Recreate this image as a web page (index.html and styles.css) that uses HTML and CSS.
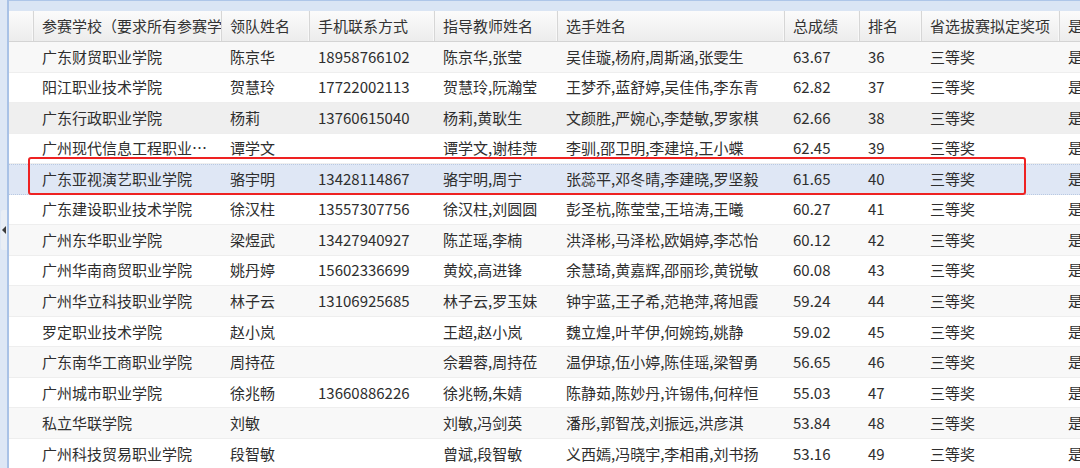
FILE: index.html
```html
<!DOCTYPE html>
<html lang="zh-CN">
<head>
<meta charset="utf-8">
<title>省选拔赛成绩</title>
<link rel="stylesheet" href="styles.css">
</head>
<body>
<div class="frame">
  <div class="rail"><div class="handle"><span class="tri"></span></div></div>
  <div class="main">
    <div class="topband"></div>
    <div class="grid">
      <div class="row head">
        <div class="c c0"></div>
        <div class="c c1">参赛学校（要求所有参赛学校全称）</div>
        <div class="c c2">领队姓名</div>
        <div class="c c3">手机联系方式</div>
        <div class="c c4">指导教师姓名</div>
        <div class="c c5">选手姓名</div>
        <div class="c c6">总成绩</div>
        <div class="c c7">排名</div>
        <div class="c c8">省选拔赛拟定奖项</div>
        <div class="c c9">是否推荐</div>
      </div>
      <div class="row alt">
        <div class="c c0"></div><div class="c c1">广东财贸职业学院</div><div class="c c2">陈京华</div><div class="c c3">18958766102</div><div class="c c4">陈京华,张莹</div><div class="c c5">吴佳璇,杨府,周斯涵,张雯生</div><div class="c c6">63.67</div><div class="c c7">36</div><div class="c c8">三等奖</div><div class="c c9">是</div>
      </div>
      <div class="row">
        <div class="c c0"></div><div class="c c1">阳江职业技术学院</div><div class="c c2">贺慧玲</div><div class="c c3">17722002113</div><div class="c c4">贺慧玲,阮瀚莹</div><div class="c c5">王梦乔,蓝舒婷,吴佳伟,李东青</div><div class="c c6">62.82</div><div class="c c7">37</div><div class="c c8">三等奖</div><div class="c c9">是</div>
      </div>
      <div class="row hover">
        <div class="c c0"></div><div class="c c1">广东行政职业学院</div><div class="c c2">杨莉</div><div class="c c3">13760615040</div><div class="c c4">杨莉,黄耿生</div><div class="c c5">文颜胜,严婉心,李楚敏,罗家棋</div><div class="c c6">62.66</div><div class="c c7">38</div><div class="c c8">三等奖</div><div class="c c9">是</div>
      </div>
      <div class="row">
        <div class="c c0"></div><div class="c c1">广州现代信息工程职业学院</div><div class="c c2">谭学文</div><div class="c c3"></div><div class="c c4">谭学文,谢桂萍</div><div class="c c5">李驯,邵卫明,李建培,王小蝶</div><div class="c c6">62.45</div><div class="c c7">39</div><div class="c c8">三等奖</div><div class="c c9">是</div>
      </div>
      <div class="row selected">
        <div class="c c0"></div><div class="c c1">广东亚视演艺职业学院</div><div class="c c2">骆宇明</div><div class="c c3">13428114867</div><div class="c c4">骆宇明,周宁</div><div class="c c5">张蕊平,邓冬晴,李建晓,罗坚毅</div><div class="c c6">61.65</div><div class="c c7">40</div><div class="c c8">三等奖</div><div class="c c9">是</div>
        <div class="mark"></div>
      </div>
      <div class="row">
        <div class="c c0"></div><div class="c c1">广东建设职业技术学院</div><div class="c c2">徐汉柱</div><div class="c c3">13557307756</div><div class="c c4">徐汉柱,刘圆圆</div><div class="c c5">彭圣杭,陈莹莹,王培涛,王曦</div><div class="c c6">60.27</div><div class="c c7">41</div><div class="c c8">三等奖</div><div class="c c9">是</div>
      </div>
      <div class="row alt">
        <div class="c c0"></div><div class="c c1">广州东华职业学院</div><div class="c c2">梁煜武</div><div class="c c3">13427940927</div><div class="c c4">陈芷瑶,李楠</div><div class="c c5">洪泽彬,马泽松,欧娟婷,李芯怡</div><div class="c c6">60.12</div><div class="c c7">42</div><div class="c c8">三等奖</div><div class="c c9">是</div>
      </div>
      <div class="row">
        <div class="c c0"></div><div class="c c1">广州华南商贸职业学院</div><div class="c c2">姚丹婷</div><div class="c c3">15602336699</div><div class="c c4">黄姣,高进锋</div><div class="c c5">余慧琦,黄嘉辉,邵丽珍,黄锐敏</div><div class="c c6">60.08</div><div class="c c7">43</div><div class="c c8">三等奖</div><div class="c c9">是</div>
      </div>
      <div class="row alt">
        <div class="c c0"></div><div class="c c1">广州华立科技职业学院</div><div class="c c2">林子云</div><div class="c c3">13106925685</div><div class="c c4">林子云,罗玉妹</div><div class="c c5">钟宇蓝,王子希,范艳萍,蒋旭霞</div><div class="c c6">59.24</div><div class="c c7">44</div><div class="c c8">三等奖</div><div class="c c9">是</div>
      </div>
      <div class="row">
        <div class="c c0"></div><div class="c c1">罗定职业技术学院</div><div class="c c2">赵小岚</div><div class="c c3"></div><div class="c c4">王超,赵小岚</div><div class="c c5">魏立煌,叶芊伊,何婉筠,姚静</div><div class="c c6">59.02</div><div class="c c7">45</div><div class="c c8">三等奖</div><div class="c c9">是</div>
      </div>
      <div class="row alt">
        <div class="c c0"></div><div class="c c1">广东南华工商职业学院</div><div class="c c2">周持莅</div><div class="c c3"></div><div class="c c4">佘碧蓉,周持莅</div><div class="c c5">温伊琼,伍小婷,陈佳瑶,梁智勇</div><div class="c c6">56.65</div><div class="c c7">46</div><div class="c c8">三等奖</div><div class="c c9">是</div>
      </div>
      <div class="row">
        <div class="c c0"></div><div class="c c1">广州城市职业学院</div><div class="c c2">徐兆畅</div><div class="c c3">13660886226</div><div class="c c4">徐兆畅,朱婧</div><div class="c c5">陈静茹,陈妙丹,许锡伟,何梓恒</div><div class="c c6">55.03</div><div class="c c7">47</div><div class="c c8">三等奖</div><div class="c c9">是</div>
      </div>
      <div class="row alt">
        <div class="c c0"></div><div class="c c1">私立华联学院</div><div class="c c2">刘敏</div><div class="c c3"></div><div class="c c4">刘敏,冯剑英</div><div class="c c5">潘彤,郭智茂,刘振远,洪彦淇</div><div class="c c6">53.84</div><div class="c c7">48</div><div class="c c8">三等奖</div><div class="c c9">是</div>
      </div>
      <div class="row">
        <div class="c c0"></div><div class="c c1">广州科技贸易职业学院</div><div class="c c2">段智敏</div><div class="c c3"></div><div class="c c4">曾斌,段智敏</div><div class="c c5">义西嫣,冯晓宇,李相甫,刘书扬</div><div class="c c6">53.16</div><div class="c c7">49</div><div class="c c8">三等奖</div><div class="c c9">是</div>
      </div>
    </div>
  </div>
</div>
</body>
</html>
```
FILE: styles.css
```css
html, body {
  margin: 0;
  padding: 0;
  height: 100%;
  overflow: hidden;
  background: #ffffff;
}
body {
  font-family: "Noto Sans CJK SC", "Liberation Sans", sans-serif;
  font-size: 15px;
  color: #2e2e2e;
}
.frame {
  display: flex;
  height: 468px;
  width: 1080px;
  overflow: hidden;
}
.rail {
  position: relative;
  width: 7px;
  flex: 0 0 7px;
  background: #dde7f5;
  border-right: 2px solid #a9c2e6;
}
.handle {
  position: absolute;
  left: 1px;
  top: 210px;
  width: 6px;
  height: 40px;
  background: #e9eef5;
  border-radius: 2px 0 0 2px;
}
.tri {
  position: absolute;
  left: 1px;
  top: 16px;
  width: 0;
  height: 0;
  border-top: 4px solid transparent;
  border-bottom: 4px solid transparent;
  border-right: 4px solid #3c3c3c;
}
.main {
  flex: 1;
  display: flex;
  flex-direction: column;
  min-width: 0;
}
.topband {
  height: 11px;
  flex: 0 0 11px;
  background: #dae5f4;
  border-top: 1px solid #aec6e8;
  box-sizing: border-box;
}
.grid {
  display: flex;
  flex-direction: column;
}
.row {
  position: relative;
  display: flex;
  height: 30.54px;
  flex: 0 0 30.54px;
  box-sizing: border-box;
  border-bottom: 1px solid #eeeeee;
  background: #ffffff;
  align-items: center;
}
.row.alt { background: #f8f8f8; }
.row.hover { background: #efefef; }
.row.selected {
  background: #dfe7f5;
  border-top: 1px dotted #b9c9e2;
  border-bottom: 1px dotted #b9c9e2;
}
.row.head {
  height: 31px;
  flex: 0 0 31px;
  background: linear-gradient(#fbfbfb, #ececec);
  border-bottom: 1px solid #d4d4d4;
  color: #333333;
}
.c {
  box-sizing: border-box;
  padding-left: 8px;
  padding-right: 6px;
  white-space: nowrap;
  overflow: hidden;
  text-overflow: ellipsis;
  flex: 0 0 auto;
  line-height: 30px;
}
.head .c {
  text-overflow: clip;
  padding-right: 0;
  border-right: 1px solid #d6d6d6;
  box-shadow: inset -1px 0 0 #f8f8f8;
  height: 30px;
}
.c0 { width: 25px; padding-left: 0; }
.c1 { width: 188px; }
.c2 { width: 88px; }
.c3 { width: 125px; }
.c4 { width: 123px; }
.c5 { width: 227px; }
.c6 { width: 75px; }
.c7 { width: 62px; }
.c8 { width: 138px; }
.c9 { width: 60px; }
.mark {
  position: absolute;
  left: 19px;
  top: -8px;
  width: 998px;
  height: 38px;
  border: 2px solid #ee2222;
  border-radius: 3px;
  box-sizing: border-box;
  pointer-events: none;
}
```
